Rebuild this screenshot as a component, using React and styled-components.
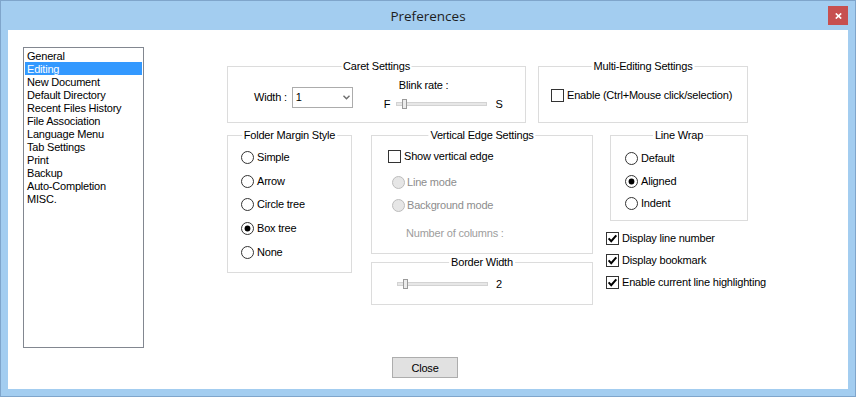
import React from 'react';
import styled, { createGlobalStyle } from 'styled-components';

const Global = createGlobalStyle`
  html, body { margin: 0; padding: 0; background: #fff; }
  body { font-family: "Liberation Sans", Arial, sans-serif; }
  * { box-sizing: border-box; }
`;

const Window = styled.div`
  width: 856px;
  height: 397px;
  border: 1px solid #7fa5cb;
  background: #a3cdf0;
  display: flex;
  flex-direction: column;
`;

const TitleBar = styled.div`
  height: 29px;
  flex: none;
  display: grid;
  grid-template-columns: 1fr auto 1fr;
  align-items: start;
  padding: 0 7px;
`;

const Title = styled.div`
  grid-column: 2;
  font-family: "Open Sans", "Noto Sans", sans-serif;
  font-size: 13.5px;
  line-height: 30px;
  color: #1e1e1e;
`;

const CloseX = styled.div`
  grid-column: 3;
  justify-self: end;
  margin-top: 5px;
  width: 20px;
  height: 19px;
  background: #c75050;
  display: flex;
  align-items: center;
  justify-content: center;
`;

const Client = styled.div`
  flex: 1;
  margin: 0 7px 7px;
  background: #fff;
  display: flex;
  flex-direction: column;
  padding: 17px 0 0 15px;
  font-size: 11px;
  letter-spacing: -0.2px;
  color: #000;
`;

const MainRow = styled.div`
  display: flex;
  align-items: flex-start;
`;

const Sidebar = styled.ul`
  width: 121px;
  height: 301px;
  margin: 0;
  padding: 1px;
  list-style: none;
  border: 1px solid #828790;
  flex: none;
`;

const SideItem = styled.li`
  height: 13px;
  line-height: 12px;
  padding: 1px 0 0 2px;
  white-space: nowrap;
  background: ${(p) => (p.$sel ? '#3399ff' : 'transparent')};
  color: ${(p) => (p.$sel ? '#fff' : '#000')};
`;

const Settings = styled.div`
  margin-left: 83px;
  margin-top: 19px;
  display: flex;
  flex-direction: column;
  gap: 12px;
`;

const Row = styled.div`
  display: flex;
  align-items: flex-start;
  gap: ${(p) => p.$gap || 0}px;
`;

const Column = styled.div`
  display: flex;
  flex-direction: column;
  gap: ${(p) => p.$gap || 0}px;
  margin-left: ${(p) => p.$ml || 0}px;
  width: ${(p) => (p.$w ? `${p.$w}px` : 'auto')};
`;

const Group = styled.div`
  position: relative;
  flex: none;
  width: ${(p) => p.$w}px;
  height: ${(p) => p.$h}px;
  margin-left: ${(p) => p.$ml || 0}px;
  border: 1px solid #dcdcdc;
  display: flex;
  flex-direction: ${(p) => (p.$row ? 'row' : 'column')};
  align-items: flex-start;
  padding: ${(p) => p.$pad || '0'};
`;

const Legend = styled.span`
  position: absolute;
  top: -7px;
  left: 50%;
  transform: translateX(-50%);
  background: #fff;
  padding: 0 2px;
  line-height: 13px;
  white-space: nowrap;
`;

const Field = styled.div`
  display: flex;
  align-items: center;
  gap: ${(p) => p.$gap || 0}px;
  margin: ${(p) => p.$m || '0'};
  height: ${(p) => (p.$h ? `${p.$h}px` : 'auto')};
  line-height: 13px;
  white-space: nowrap;
  color: ${(p) => (p.$dim ? '#8d8d8d' : '#000')};
`;

const Stack = styled.div`
  display: flex;
  flex-direction: column;
  margin: ${(p) => p.$m || '0'};
`;

const Label = styled.span`
  line-height: 13px;
  white-space: nowrap;
  padding-left: ${(p) => p.$pl || 0}px;
  color: ${(p) => (p.$dim ? '#9d9d9d' : '#000')};
  margin: ${(p) => p.$m || '0'};
`;

const Select = styled.div`
  width: 61px;
  height: 21px;
  border: 1px solid #acacac;
  background: #fff;
  display: flex;
  align-items: center;
  padding: 0 2px 0 3px;
  justify-content: space-between;
`;

const Track = styled.div`
  position: relative;
  width: 91px;
  height: 4px;
  background: #e7e7e7;
  border: 1px solid #d3d3d3;
`;

const Thumb = styled.div`
  position: absolute;
  top: -4px;
  width: 5px;
  height: 10px;
  background: #ececec;
  border: 1px solid #9a9a9a;
`;

const BoxSvg = styled.svg`
  flex: none;
  display: block;
`;

const Button = styled.button`
  margin: 9px 0 0 369px;
  width: 66px;
  height: 21px;
  padding: 0;
  background: #e1e1e1;
  border: 1px solid #adadad;
  font-family: "Liberation Sans", Arial, sans-serif;
  font-size: 11px;
  letter-spacing: -0.2px;
  color: #000;
  align-self: flex-start;
`;

function Check({ checked }) {
  return (
    <BoxSvg width="13" height="13" viewBox="0 0 13 13">
      <rect x="0.5" y="0.5" width="12" height="12" fill="#fff" stroke="#333" />
      {checked && (
        <path d="M2.6 6.4 L5.2 9.2 L10.3 3.3" fill="none" stroke="#000" strokeWidth="2" />
      )}
    </BoxSvg>
  );
}

function Radio({ checked, disabled }) {
  return (
    <BoxSvg width="13" height="13" viewBox="0 0 13 13">
      <circle
        cx="6.5"
        cy="6.5"
        r="6"
        fill={disabled ? '#e6e6e6' : '#fff'}
        stroke={disabled ? '#bcbcbc' : '#333'}
      />
      {checked && <circle cx="6.5" cy="6.5" r="2.9" fill="#000" />}
    </BoxSvg>
  );
}

function Slider({ offset }) {
  return (
    <Track>
      <Thumb style={{ left: offset }} />
    </Track>
  );
}

const sideItems = [
  'General',
  'Editing',
  'New Document',
  'Default Directory',
  'Recent Files History',
  'File Association',
  'Language Menu',
  'Tab Settings',
  'Print',
  'Backup',
  'Auto-Completion',
  'MISC.',
];

const folderStyles = ['Simple', 'Arrow', 'Circle tree', 'Box tree', 'None'];
const wraps = ['Default', 'Aligned', 'Indent'];
const checks = ['Display line number', 'Display bookmark', 'Enable current line highlighting'];

export default function App() {
  return (
    <>
      <Global />
      <Window>
        <TitleBar>
          <Title>Preferences</Title>
          <CloseX>
            <svg width="7" height="6" viewBox="0 0 7 6">
              <path d="M0.8 0.5 L6.2 5.5 M6.2 0.5 L0.8 5.5" stroke="#fff" strokeWidth="1.7" />
            </svg>
          </CloseX>
        </TitleBar>
        <Client>
          <MainRow>
            <Sidebar>
              {sideItems.map((s) => (
                <SideItem key={s} $sel={s === 'Editing'}>
                  {s}
                </SideItem>
              ))}
            </Sidebar>
            <Settings>
              <Row $gap={12}>
                <Group $w={299} $h={57} $row>
                  <Legend>Caret Settings</Legend>
                  <Field $gap={5} $h={21} $m="20px 0 0 26px">
                    <Label>Width :</Label>
                    <Select>
                      <span>1</span>
                      <svg width="7" height="5" viewBox="0 0 7 5">
                        <path d="M0.5 0.8 L3.5 3.8 L6.5 0.8" fill="none" stroke="#6d6d6d" strokeWidth="1.4" />
                      </svg>
                    </Select>
                  </Field>
                  <Stack $m="12px 0 0 31px">
                    <Label $pl={15}>Blink rate :</Label>
                    <Field $gap={6} $h={12} $m="6px 0 0 0">
                      <Label>F</Label>
                      <Slider offset={5} />
                      <Label $m="0 0 0 2px">S</Label>
                    </Field>
                  </Stack>
                </Group>
                <Group $w={210} $h={57} $pad="22px 0 0 12px">
                  <Legend>Multi-Editing Settings</Legend>
                  <Field $gap={3} $h={13}>
                    <Check />
                    <span>Enable (Ctrl+Mouse click/selection)</span>
                  </Field>
                </Group>
              </Row>
              <Row>
                <Group $w={125} $h={138} $pad="10px 0 0 13px">
                  <Legend>Folder Margin Style</Legend>
                  {folderStyles.map((f) => (
                    <Field key={f} $gap={3} $h={23.6}>
                      <Radio checked={f === 'Box tree'} />
                      <span>{f}</span>
                    </Field>
                  ))}
                </Group>
                <Column $gap={8} $ml={19} $w={222}>
                  <Group $w={222} $h={119} $pad="14px 0 0 16px">
                    <Legend>Vertical Edge Settings</Legend>
                    <Field $gap={3} $h={13}>
                      <Check />
                      <span>Show vertical edge</span>
                    </Field>
                    <Field $gap={2} $h={13} $m="13px 0 0 4px" $dim>
                      <Radio disabled />
                      <span>Line mode</span>
                    </Field>
                    <Field $gap={2} $h={13} $m="10px 0 0 4px" $dim>
                      <Radio disabled />
                      <span>Background mode</span>
                    </Field>
                    <Label $dim $m="15px 0 0 18px">
                      Number of columns :
                    </Label>
                  </Group>
                  <Group $w={222} $h={43} $pad="16px 0 0 25px">
                    <Legend>Border Width</Legend>
                    <Field $gap={8} $h={10}>
                      <Slider offset={5} />
                      <span>2</span>
                    </Field>
                  </Group>
                </Column>
                <Column $ml={12}>
                  <Group $w={138} $h={86} $ml={5} $pad="11px 0 0 14px">
                    <Legend>Line Wrap</Legend>
                    {wraps.map((w) => (
                      <Field key={w} $gap={3} $h={22.75}>
                        <Radio checked={w === 'Aligned'} />
                        <span>{w}</span>
                      </Field>
                    ))}
                  </Group>
                  <Stack $m="7px 0 0 1px">
                    {checks.map((c) => (
                      <Field key={c} $gap={3} $h={21.75}>
                        <Check checked />
                        <span>{c}</span>
                      </Field>
                    ))}
                  </Stack>
                </Column>
              </Row>
            </Settings>
          </MainRow>
          <Button>Close</Button>
        </Client>
      </Window>
    </>
  );
}
